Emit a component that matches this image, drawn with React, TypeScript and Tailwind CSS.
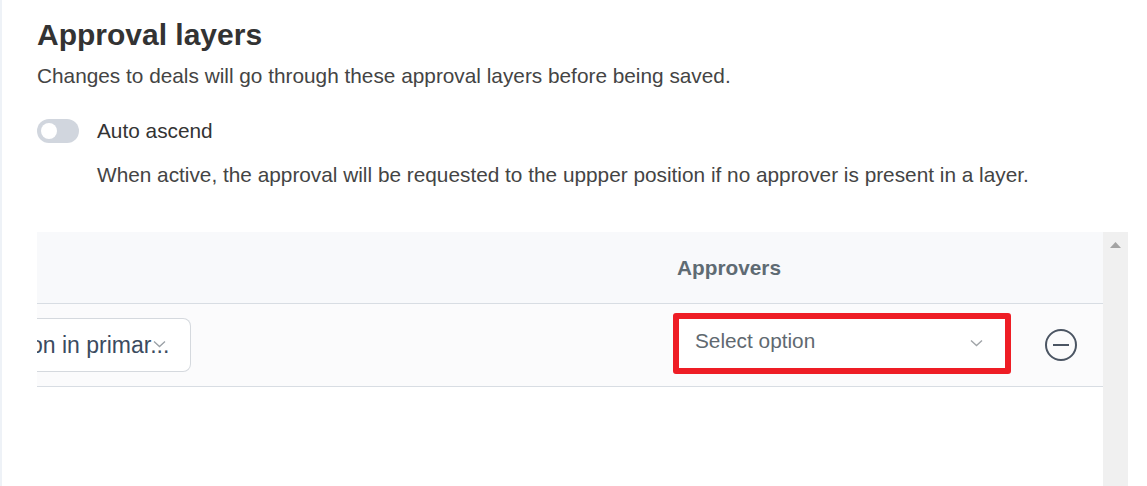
import React from "react";

export default function App() {
  return (
    <div className="w-[1147px] h-[486px] overflow-hidden bg-white border-l-2 border-[#eef2f7] font-['Liberation_Sans',Arial,sans-serif] text-[#333333]">
      <div className="pl-[35px] pt-[17px]">
        <h1 className="text-[30px] leading-[36px] font-bold text-[#333333]">Approval layers</h1>
        <p className="mt-[11px] text-[20.8px] leading-[24px] text-[#444444]">
          Changes to deals will go through these approval layers before being saved.
        </p>
        <div className="mt-[31px] flex items-center h-[24px]">
          <div className="w-[42px] h-[24px] rounded-full bg-[#d1d6de] flex items-center px-[4px]">
            <div className="w-[16px] h-[16px] rounded-full bg-white" />
          </div>
          <span className="ml-[18px] text-[20.8px] leading-[24px] text-[#333333]">Auto ascend</span>
        </div>
        <p className="mt-[20px] ml-[60px] text-[20.8px] leading-[24px] text-[#444444]">
          When active, the approval will be requested to the uppper position if no approver is present in a layer.
        </p>
      </div>
      <div className="mt-[45px] flex h-[300px]">
        <div className="ml-[35px] flex-1 overflow-hidden">
          <div className="h-[72px] bg-[#f8f9fb] border-b border-[#d8dde3] flex items-center">
            <span className="ml-[640px] text-[20.8px] leading-[24px] font-bold text-[#5f6b73]">Approvers</span>
          </div>
          <div className="h-[83px] bg-[#fbfbfc] border-b border-[#d8dde3] flex items-start">
            <div className="mt-[14px] relative w-[154px] h-[54px] bg-white border border-l-0 border-[#d5d9de] rounded-r-[8px] flex items-center overflow-hidden">
              <span className="ml-[-7px] text-[23px] leading-[26px] text-[#3b4b5f] whitespace-nowrap">on in primar...</span>
              <svg className="absolute left-[116px] top-[21px]" width="13" height="8" viewBox="0 0 13 8" fill="none">
                <path d="M1 1.5 L6.5 6.5 L12 1.5" stroke="#9aa0a6" strokeWidth="1.3" />
              </svg>
            </div>
            <div className="mt-[9px] ml-[482px] w-[338px] h-[61px] border-[6px] border-[#ee1d25] rounded-[3px] bg-white flex items-center justify-between pl-[16px] pr-[22px]">
              <span className="mb-[5px] text-[20.8px] leading-[24px] text-[#5f6970]">Select option</span>
              <svg className="mb-[2px]" width="13" height="8" viewBox="0 0 13 8" fill="none">
                <path d="M1 1.5 L6.5 6.5 L12 1.5" stroke="#a0a4a8" strokeWidth="1.4" />
              </svg>
            </div>
            <svg className="mt-[24px] ml-[33px]" width="34" height="34" viewBox="0 0 34 34" fill="none">
              <circle cx="17" cy="17" r="15" stroke="#4b5563" strokeWidth="2" />
              <path d="M9 17 H25" stroke="#4b5563" strokeWidth="2" />
            </svg>
          </div>
        </div>
        <div className="w-[25px] bg-[#f0f0f0] flex justify-center pt-[10px]">
          <svg width="11" height="6" viewBox="0 0 11 6">
            <path d="M5.5 0 L11 6 H0 Z" fill="#a3a3a3" />
          </svg>
        </div>
        <div className="w-[19px]" />
      </div>
    </div>
  );
}
